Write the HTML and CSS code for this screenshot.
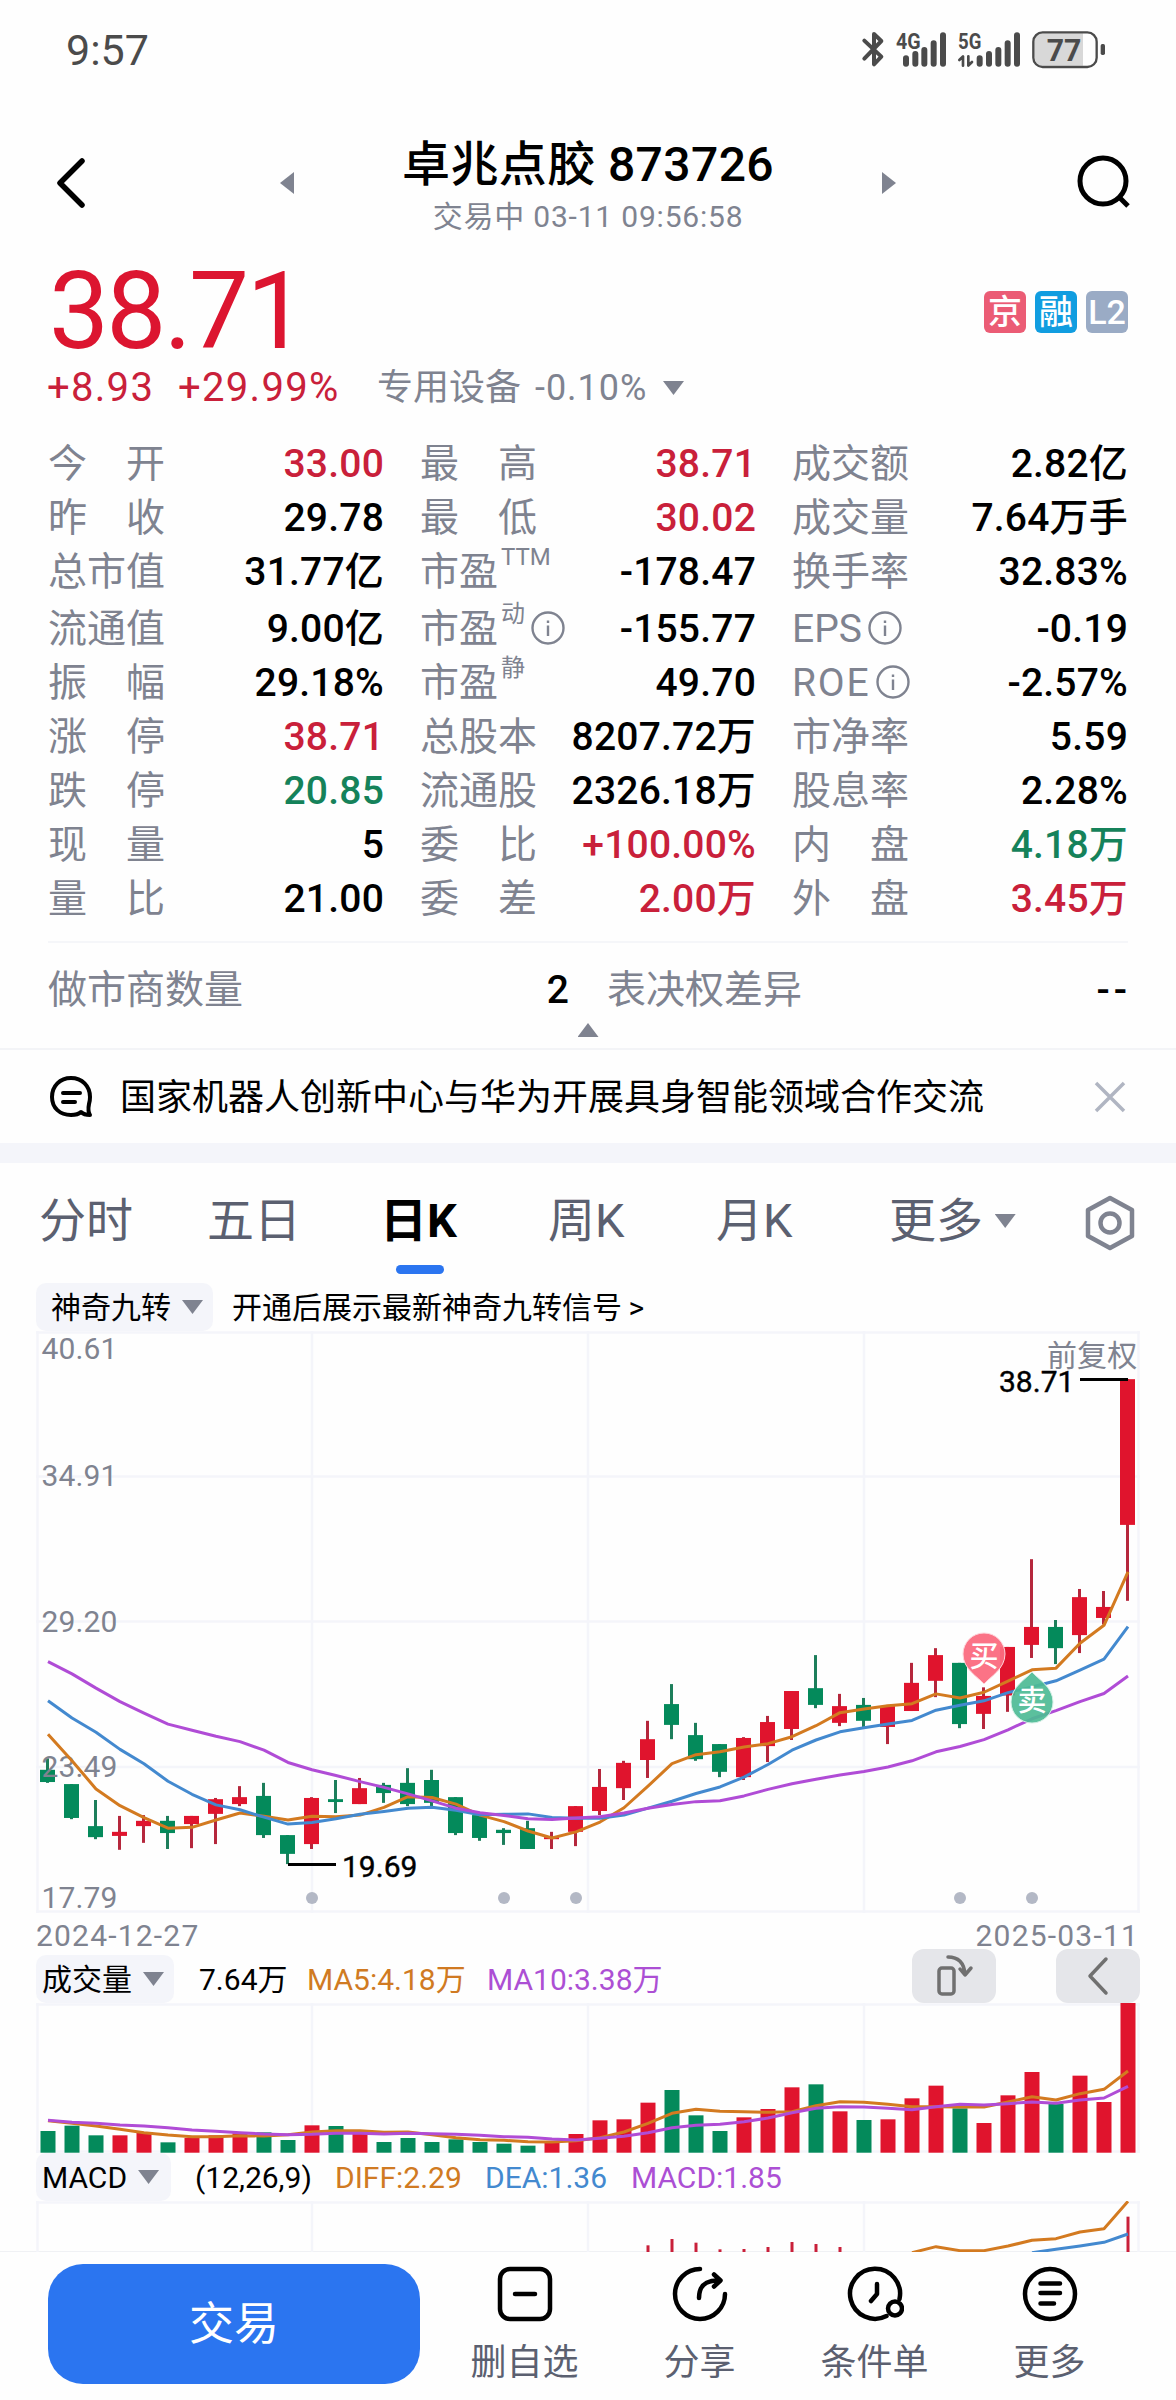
FILE: index.html
```html
<!DOCTYPE html>
<html lang="zh-CN">
<head>
    <meta charset="UTF-8">
    <meta name="viewport" content="width=device-width, initial-scale=1.0">
    <title>卓兆点胶 873726</title>
    <link rel="stylesheet" href="styles.css">
</head>
<body>
    <div class="status-bar">
        <span class="clock">9:57</span>
        <svg class="status-icons" viewBox="0 0 780 180">
            <path class="bt" d="M43 62 L94 110 L72 133 V42 L94 63 L43 116"/>
            <g class="signal">
                <path d="M168 115V131M196 102V131M223 90V131M251 70V131M279 46V131"/>
                <path d="M389 115V131M417 102V131M445 90V131M473 70V131M501 46V131"/>
            </g>
            <path class="updown" d="M328 120L339 109V137M366 126L355 137V109"/>
            <text x="138" y="87" class="net" textLength="74" lengthAdjust="spacingAndGlyphs">4G</text>
            <text x="324" y="87" class="net" textLength="70" lengthAdjust="spacingAndGlyphs">5G</text>
            <path fill="#d8d8d8" d="M580 40H699V137H580Q553 137 553 108V68Q553 40 580 40Z"/>
            <rect class="battery" x="550" y="37" width="190" height="104" rx="28"/>
            <rect x="752" y="72" width="13" height="33" rx="5" fill="#4b4b4b"/>
            <text x="590" y="123" class="charge" textLength="104" lengthAdjust="spacingAndGlyphs">77</text>
        </svg>
    </div>

    <div class="header">
        <svg class="back" viewBox="0 0 30 50"><path d="M26 3L4 25L26 47"/></svg>
        <svg class="prev" viewBox="0 0 14 22"><path d="M14 0V22L0 11Z"/></svg>
        <div class="title">
            <h1>卓兆点胶 873726</h1>
            <p>交易中 03-11 09:56:58</p>
        </div>
        <svg class="next" viewBox="0 0 14 22"><path d="M0 0V22L14 11Z"/></svg>
        <svg class="search" viewBox="0 0 56 56"><circle cx="26" cy="26" r="23"/><path d="M42 42L51 51"/></svg>
    </div>

    <div class="quote">
        <div class="price">38.71</div>
        <div class="tags">
            <span class="tag jing">京</span>
            <span class="tag rong">融</span>
            <span class="tag level">L2</span>
        </div>
    </div>
    <div class="change">
        <span class="up diff">+8.93</span>
        <span class="up pct">+29.99%</span>
        <span class="sector">专用设备 <em>-0.10%</em></span>
        <i class="caret"></i>
    </div>

    <div class="stats">
        <div class="col">
            <div class="stat"><label>今　开</label><b class="up">33.00</b></div>
            <div class="stat"><label>昨　收</label><b>29.78</b></div>
            <div class="stat"><label>总市值</label><b>31.77亿</b></div>
            <div class="stat tall"><label>流通值</label><b>9.00亿</b></div>
            <div class="stat"><label>振　幅</label><b>29.18%</b></div>
            <div class="stat"><label>涨　停</label><b class="up">38.71</b></div>
            <div class="stat"><label>跌　停</label><b class="down">20.85</b></div>
            <div class="stat"><label>现　量</label><b>5</b></div>
            <div class="stat"><label>量　比</label><b>21.00</b></div>
        </div>
        <div class="col">
            <div class="stat"><label>最　高</label><b class="up">38.71</b></div>
            <div class="stat"><label>最　低</label><b class="up">30.02</b></div>
            <div class="stat"><label>市盈<small>TTM</small></label><b>-178.47</b></div>
            <div class="stat tall"><label>市盈<small>动</small><svg class="info" viewBox="0 0 34 34"><circle cx="17" cy="17" r="15.5"/><path d="M17 14.5V25M17 9.5V12"/></svg></label><b>-155.77</b></div>
            <div class="stat"><label>市盈<small>静</small></label><b>49.70</b></div>
            <div class="stat"><label>总股本</label><b>8207.72万</b></div>
            <div class="stat"><label>流通股</label><b>2326.18万</b></div>
            <div class="stat"><label>委　比</label><b class="up">+100.00%</b></div>
            <div class="stat"><label>委　差</label><b class="up">2.00万</b></div>
        </div>
        <div class="col">
            <div class="stat"><label>成交额</label><b>2.82亿</b></div>
            <div class="stat"><label>成交量</label><b>7.64万手</b></div>
            <div class="stat"><label>换手率</label><b>32.83%</b></div>
            <div class="stat tall"><label>EPS<svg class="info" viewBox="0 0 34 34"><circle cx="17" cy="17" r="15.5"/><path d="M17 14.5V25M17 9.5V12"/></svg></label><b>-0.19</b></div>
            <div class="stat"><label class="roe">ROE<svg class="info" viewBox="0 0 34 34"><circle cx="17" cy="17" r="15.5"/><path d="M17 14.5V25M17 9.5V12"/></svg></label><b>-2.57%</b></div>
            <div class="stat"><label>市净率</label><b>5.59</b></div>
            <div class="stat"><label>股息率</label><b>2.28%</b></div>
            <div class="stat"><label>内　盘</label><b class="down">4.18万</b></div>
            <div class="stat"><label>外　盘</label><b class="up">3.45万</b></div>
        </div>
    </div>

    <div class="extra">
        <div class="stat"><label>做市商数量</label><b>2</b></div>
        <div class="stat"><label>表决权差异</label><b class="empty">--</b></div>
    </div>
    <div class="collapse"><i class="caret caret-up"></i></div>

    <div class="news">
        <svg class="news-icon" viewBox="0 0 44 44"><path d="M22 3C11 3 3 11 3 22S11 40 22 40C26 40 30 39 32 37C34 39 37 40 41 40C39 37 39 34 40 29C41 26 41 24 41 22C41 11 33 3 22 3Z"/><path d="M14 18H31M14 27H26"/></svg>
        <p>国家机器人创新中心与华为开展具身智能领域合作交流</p>
        <svg class="close" viewBox="0 0 32 32"><path d="M2 2L30 30M30 2L2 30"/></svg>
    </div>

    <div class="tabs">
        <span>分时</span>
        <span class="wide">五日</span>
        <span class="active">日K</span>
        <span>周K</span>
        <span class="wide">月K</span>
        <span class="more">更多 <i class="caret"></i></span>
        <svg class="setting" viewBox="0 0 52 56"><path d="M26 3L48 15V41L26 53L4 41V15Z"/><circle cx="26" cy="28" r="9.5"/></svg>
    </div>

    <div class="chart-box">
        <div class="chart-head">
            <span class="chip chip-signal">神奇九转 <i class="caret"></i></span>
            <span class="signal-tip">开通后展示最新神奇九转信号 <em>&gt;</em></span>
        </div>
        <svg id="priceChart" width="1104" height="582" viewBox="36 0 1104 582"></svg>
        <div class="dates"><span>2024-12-27</span><span>2025-03-11</span></div>

        <div class="chart-head">
            <span class="chip chip-vol">成交量 <i class="caret"></i></span>
            <span class="v1">7.64万</span>
            <span class="v2 orange">MA5:4.18万</span>
            <span class="v3 purple">MA10:3.38万</span>
            <div class="tools">
                <button><svg viewBox="0 0 40 48"><rect x="5" y="16" width="15" height="26" rx="3"/><path d="M14 5C24 5 30 11 31 22M26 17L31 23L37 16"/></svg></button>
                <button><svg viewBox="0 0 40 48"><path d="M28 7L12 24L28 41"/></svg></button>
            </div>
        </div>
        <svg id="volumeChart" width="1104" height="150" viewBox="36 0 1104 150"></svg>

        <div class="chart-head">
            <span class="chip chip-macd">MACD <i class="caret"></i></span>
            <span class="m1">(12,26,9)</span>
            <span class="m2 orange">DIFF:2.29</span>
            <span class="m3 blue">DEA:1.36</span>
            <span class="m4 purple">MACD:1.85</span>
        </div>
        <svg id="macdChart" width="1104" height="51" viewBox="36 0 1104 51"></svg>
    </div>

    <div class="bottom-bar">
        <button class="trade">交易</button>
        <div class="action">
            <svg viewBox="0 0 58 58"><rect x="4" y="4" width="50" height="50" rx="10"/><path d="M19 29H39"/></svg>
            <span>删自选</span>
        </div>
        <div class="action">
            <svg viewBox="0 0 58 58"><path d="M29 4A25 25 0 1 0 54 29M28 33C28 21 34 15.500 47 15.500M43 9.500L49.500 15.500L43 21.500"/></svg>
            <span>分享</span>
        </div>
        <div class="action">
            <svg viewBox="0 0 58 58"><path d="M40.500 51A25 25 0 1 1 53.500 34M31 19V29L25 36"/><circle cx="49" cy="43.500" r="7"/></svg>
            <span>条件单</span>
        </div>
        <div class="action">
            <svg viewBox="0 0 58 58"><circle cx="29" cy="29" r="25"/><path d="M19.500 18.500H39M19.500 28H39M19.500 38.500H33"/></svg>
            <span>更多</span>
        </div>
    </div>

    <script src="chart.js"></script>
</body>
</html>
```
FILE: styles.css
```css
* {
    box-sizing: border-box;
}
body {
    margin: 0;
    width: 1176px;
    height: 2400px;
    overflow: hidden;
    background-color: #fefefe;
    color: #000;
    font-family: Roboto, "Noto Sans CJK SC", sans-serif;
}
h1, p {
    margin: 0;
}
em, i {
    font-style: normal;
}
svg {
    display: block;
    flex: none;
    fill: none;
}
button {
    border: none;
    padding: 0;
    font-family: inherit;
}
.up {
    color: #c9203a;
}
.down {
    color: #15825a;
}
.orange {
    color: #d07a22;
}
.blue {
    color: #4389cf;
}
.purple {
    color: #ac4fd4;
}
.caret {
    display: inline-block;
    width: 21px;
    height: 14px;
    background-color: #7f8390;
    clip-path: polygon(0 0, 100% 0, 50% 100%);
}
.caret-up {
    clip-path: polygon(50% 0, 100% 100%, 0 100%);
}

/* status bar */
.status-bar {
    display: flex;
    justify-content: space-between;
    height: 120px;
    padding: 20px 66px 0 66px;
}
.clock {
    font-size: 43px;
    line-height: 61px;
    color: #4b4b4b;
}
.status-icons {
    width: 260px;
    height: 60px;
    stroke-linecap: round;
    stroke-linejoin: round;
}
.status-icons path.bt {
    stroke: #4b4b4b;
    stroke-width: 12;
}
.signal {
    stroke: #4b4b4b;
    stroke-width: 18;
}
.updown {
    stroke: #4b4b4b;
    stroke-width: 8;
}
.battery {
    stroke: #4b4b4b;
    stroke-width: 7;
}
.net {
    fill: #4b4b4b;
    font-size: 66px;
    font-weight: 700;
}
.charge {
    fill: #4b4b4b;
    font-size: 94px;
    font-weight: 700;
}

/* header */
.header {
    display: flex;
    align-items: center;
    height: 126px;
    padding: 0 43px 0 56px;
}
.back {
    width: 30px;
    height: 50px;
    stroke: #000;
    stroke-width: 5.5;
    stroke-linecap: round;
    stroke-linejoin: round;
}
.prev, .next {
    width: 14px;
    height: 22px;
    fill: #7f8390;
}
.prev {
    margin-left: 194px;
}
.search {
    width: 56px;
    height: 56px;
    margin-left: auto;
    stroke: #000;
    stroke-width: 5;
}
.title {
    width: 588px;
    padding-top: 8px;
    text-align: center;
}
.title h1 {
    font-size: 48px;
    font-weight: 500;
    line-height: 56px;
    letter-spacing: 0.4px;
}
.title p {
    margin-top: 4px;
    font-size: 30px;
    line-height: 40px;
    letter-spacing: 0.8px;
    color: #7f8390;
}

/* price */
.quote {
    display: flex;
    justify-content: space-between;
    height: 110px;
    padding: 0 48px 0 49px;
    margin-top: 10px;
}
.price {
    font-size: 107px;
    line-height: 111px;
    letter-spacing: -2.8px;
    color: #dc1530;
}
.tags {
    display: flex;
    gap: 9px;
    padding-top: 35px;
}
.tag {
    width: 42px;
    height: 42px;
    border-radius: 6px;
    color: #fff;
    font-size: 34px;
    font-weight: 500;
    line-height: 42px;
    text-align: center;
}
.jing {
    background-color: #eb5c75;
}
.rong {
    background-color: #119de0;
}
.level {
    background-color: #9aabc5;
}
.change {
    display: flex;
    align-items: center;
    height: 44px;
    padding-left: 47px;
    font-size: 40px;
    line-height: 44px;
    letter-spacing: 1.3px;
    white-space: nowrap;
}
.diff {
    width: 131px;
}
.pct {
    width: 199px;
}
.sector {
    width: 286px;
    font-size: 36px;
    letter-spacing: 0;
    color: #7f8390;
}
.sector em {
    margin-left: 5px;
    letter-spacing: 1px;
}

/* stats */
.stats {
    display: grid;
    grid-template-columns: repeat(3, 336px);
    gap: 36px;
    width: 1080px;
    margin: 27px auto 0;
}
.stat {
    display: flex;
    justify-content: space-between;
    height: 54px;
    font-size: 39px;
    line-height: 54px;
    white-space: nowrap;
}
.tall {
    height: 57px;
    padding-top: 3px;
}
.stat label {
    display: flex;
    color: #7f8390;
}
.stat b {
    font-weight: 500;
    letter-spacing: 0.2px;
}
.stat .empty {
    letter-spacing: 4px;
    margin-right: -3px;
}
.stat .roe {
    letter-spacing: 1.8px;
}
.stat small {
    margin-left: 3px;
    font-size: 24px;
    line-height: 24px;
}
.info {
    width: 34px;
    height: 34px;
    margin: 9px 0 0 6px;
    stroke: #7f8390;
    stroke-width: 2.4;
}
.extra {
    display: grid;
    grid-template-columns: 521px 1fr;
    column-gap: 38px;
    width: 1080px;
    height: 81px;
    margin: 15px auto 0;
    padding-top: 20px;
    border-top: 2px solid #f5f6f9;
}
.collapse {
    height: 28px;
    padding-top: 1px;
    line-height: 0;
    text-align: center;
    border-bottom: 2px solid #f3f4f7;
}

/* news */
.news {
    display: flex;
    align-items: center;
    height: 113px;
    padding: 0 50px 0 49px;
    border-bottom: 20px solid #f4f5fa;
}
.news-icon {
    width: 44px;
    height: 44px;
    stroke: #000;
    stroke-width: 4;
    stroke-linecap: round;
    stroke-linejoin: round;
}
.news p {
    margin-left: 27px;
    padding-top: 2px;
    font-size: 36px;
    line-height: 50px;
}
.close {
    width: 32px;
    height: 32px;
    margin-left: auto;
    stroke: #b0b5c2;
    stroke-width: 3.5;
}

/* period tabs */
.tabs {
    display: flex;
    height: 120px;
    padding: 27px 39px 0;
    color: #5b6070;
    font-size: 47px;
    line-height: 62px;
    white-space: nowrap;
}
.tabs span {
    width: 168px;
}
.tabs .wide {
    width: 173px;
}
.tabs .active {
    color: #000;
    font-weight: 700;
}
.tabs .active::after {
    content: "";
    display: block;
    width: 48px;
    height: 9px;
    margin: 13px 0 0 16px;
    border-radius: 5px;
    background-color: #2b75f0;
}
.tabs .more {
    width: 190px;
}
.tabs .caret {
    vertical-align: 9px;
}
.setting {
    width: 52px;
    height: 56px;
    margin: 5px 0 0 5px;
    stroke: #7f8390;
    stroke-width: 4.5;
    stroke-linejoin: round;
}

/* charts */
.chart-box {
    width: 1104px;
    height: 968px;
    margin-left: 36px;
}
.chart-head {
    display: flex;
    height: 48px;
    font-size: 30px;
    line-height: 49px;
    white-space: nowrap;
}
.chip {
    border-radius: 10px;
    background-color: #f4f5fa;
    display: flex;
    align-items: center;
    gap: 11px;
    padding-left: 6px;
}
.chip-signal {
    width: 177px;
    padding-left: 15px;
    margin-right: 19px;
}
.signal-tip em {
    margin-left: -1px;
}
.chip-vol {
    width: 138px;
}
.chip-macd {
    width: 135px;
}
.v1 {
    width: 108px;
    margin-left: 25px;
}
.v2 {
    width: 180px;
}
.m1 {
    width: 140px;
    margin-left: 24px;
}
.m2 {
    width: 150px;
}
.m3 {
    width: 146px;
}
.dates {
    display: flex;
    justify-content: space-between;
    height: 42px;
    padding-right: 1px;
    font-size: 30px;
    line-height: 46px;
    letter-spacing: 1.2px;
    color: #7f8390;
}
.tools {
    display: flex;
    gap: 60px;
    height: 54px;
    margin: -6px 0 0 auto;
}
.tools button {
    display: flex;
    align-items: center;
    justify-content: center;
    width: 84px;
    border-radius: 12px;
    background-color: #e5e6ea;
}
.tools svg {
    width: 40px;
    height: 48px;
    stroke: #707070;
    stroke-width: 3.5;
    stroke-linecap: round;
    stroke-linejoin: round;
}
#priceChart {
    overflow: visible;
}
.grid {
    stroke: #f4f5fa;
    stroke-width: 2.5;
}
.axis {
    fill: #7f8390;
    font-size: 30px;
    letter-spacing: 0.1px;
}
.mark {
    fill: #000;
    stroke: #000;
    stroke-width: 0.4;
    font-size: 30px;
}
.mark-line {
    stroke: #000;
    stroke-width: 3;
}
.pin-text {
    fill: #fff;
    font-size: 29px;
    font-weight: 500;
    text-anchor: middle;
}

/* bottom bar */
.bottom-bar {
    display: flex;
    height: 148px;
    padding: 12px 39px 0 48px;
    border-top: 1px solid #f0f1f4;
    background-color: #fefefe;
}
.trade {
    width: 372px;
    height: 120px;
    margin-right: 17px;
    padding-bottom: 7px;
    border-radius: 35px;
    background-color: #2b75f0;
    color: #fff;
    font-size: 45px;
}
.action {
    flex: 1;
    display: flex;
    flex-direction: column;
    align-items: center;
    padding-top: 1px;
    color: #5b6070;
    font-size: 36px;
    line-height: 50px;
}
.action svg {
    width: 58px;
    height: 58px;
    margin-bottom: 15px;
    stroke: #000;
    stroke-width: 4.5;
    stroke-linecap: round;
    stroke-linejoin: round;
}
```
FILE: chart.js
```js
const RED = '#e0142d';
const GREEN = '#048a5b';
const ORANGE = '#d37a20';
const BLUE = '#4389cf';
const PURPLE = '#b04cd6';

// [color, high, body top, body bottom, low]
const candles = [
    ['g', 1074, 1102, 1132, 1134], ['g', 1137, 1137, 1220, 1223], ['g', 1176, 1240, 1267, 1272],
    ['r', 1215, 1254, 1264, 1298], ['r', 1213, 1227, 1240, 1281], ['g', 1215, 1227, 1257, 1296],
    ['r', 1215, 1215, 1235, 1294], ['r', 1171, 1174, 1210, 1284], ['r', 1142, 1169, 1186, 1191],
    ['g', 1134, 1166, 1262, 1269], ['g', 1262, 1262, 1308, 1333], ['r', 1169, 1171, 1284, 1296],
    ['g', 1127, 1174, 1181, 1208], ['r', 1122, 1147, 1186, 1186], ['g', 1134, 1139, 1159, 1183],
    ['g', 1098, 1134, 1186, 1191], ['g', 1102, 1127, 1183, 1191], ['g', 1169, 1169, 1257, 1262],
    ['g', 1213, 1213, 1269, 1276], ['g', 1245, 1249, 1257, 1286], ['g', 1227, 1245, 1296, 1296],
    ['r', 1254, 1267, 1272, 1296], ['r', 1191, 1191, 1254, 1289], ['r', 1100, 1144, 1203, 1213],
    ['r', 1080, 1085, 1147, 1176], ['r', 982, 1027, 1078, 1122], ['g', 892, 941, 992, 1027],
    ['g', 987, 1017, 1076, 1080], ['g', 1039, 1039, 1107, 1120], ['r', 1022, 1024, 1120, 1127],
    ['r', 970, 985, 1044, 1083], ['r', 909, 909, 1002, 1029], ['g', 821, 902, 943, 951],
    ['r', 916, 946, 987, 995], ['g', 926, 943, 982, 997], ['r', 943, 946, 997, 1039],
    ['r', 840, 889, 958, 958], ['r', 804, 821, 884, 924], ['g', 840, 840, 990, 1000],
    ['r', 900, 921, 965, 1002], ['r', 801, 801, 920, 960], ['r', 586, 752, 796, 828],
    ['g', 735, 752, 804, 843], ['r', 659, 679, 772, 816], ['r', 664, 703, 730, 746],
    ['r', 145, 145, 502, 688]
];
const ma5 = [1015, 1080, 1149, 1190, 1219, 1245, 1243, 1225, 1208, 1216, 1225, 1216, 1217, 1213, 1194, 1168, 1170, 1186, 1213, 1229, 1252, 1269, 1254, 1230, 1195, 1142, 1087, 1065, 1058, 1046, 1038, 1021, 994, 962, 953, 945, 940, 916, 926, 912, 885, 857, 853, 792, 748, 617];
const ma10 = [933, 975, 1010, 1052, 1087, 1130, 1162, 1188, 1200, 1218, 1235, 1231, 1222, 1211, 1204, 1196, 1194, 1201, 1212, 1211, 1210, 1219, 1221, 1221, 1213, 1196, 1179, 1160, 1144, 1120, 1089, 1054, 1029, 1009, 999, 990, 981, 956, 944, 933, 913, 899, 884, 858, 831, 751];
const ma20 = [837, 867, 902, 935, 963, 990, 1005, 1020, 1033, 1054, 1084, 1102, 1116, 1131, 1145, 1161, 1178, 1196, 1207, 1214, 1222, 1224, 1220, 1217, 1208, 1196, 1187, 1180, 1178, 1166, 1150, 1136, 1125, 1115, 1106, 1095, 1080, 1058, 1045, 1028, 1004, 977, 957, 935, 915, 872];

const volumes = [603, 587, 616, 616, 609, 637, 624, 616, 610, 607, 630, 586, 588, 612, 636, 624, 636, 628, 636, 641, 647, 639, 612, 571, 568, 518, 480, 556, 603, 562, 537, 472, 463, 544, 570, 568, 505, 467, 535, 579, 496, 426, 522, 437, 516, 218];
const volMa5 = [572, 580, 588, 598, 608, 615, 620, 620, 617, 618, 614, 606, 602, 602, 607, 606, 614, 623, 629, 631, 635, 636, 632, 623, 606, 580, 550, 538, 544, 545, 547, 545, 527, 515, 517, 523, 530, 530, 531, 531, 516, 500, 510, 491, 478, 423];
const volMa10 = [571, 577, 580, 585, 588, 593, 600, 604, 608, 612, 614, 613, 610, 610, 612, 610, 611, 613, 616, 620, 622, 627, 630, 625, 619, 608, 593, 586, 583, 575, 564, 548, 535, 530, 531, 535, 539, 530, 523, 525, 521, 516, 520, 510, 504, 469];

const macdBars = {25: 946, 26: 927, 27: 938, 28: 958, 29: 957, 30: 951, 31: 936, 32: 942, 33: 951, 45: 860};
const diff = [968, 950, 962, 962, 948, 931, 926, 906, 896, 814];
const dea = [968, 958, 948, 937, 912];

const getX = i => 47.5 + 24 * i;
const priceY = v => v / 2.45 - 11;
const volY = v => v / 3 - 73;
const macdY = v => v / 3 - 271;

function line(x1, y1, x2, y2, cls) {
    return `<line x1="${x1}" y1="${y1}" x2="${x2}" y2="${y2}" class="${cls}"/>`;
}

function bar(x, top, bottom, width, color) {
    return `<rect x="${x - width / 2}" y="${top}" width="${width}" height="${bottom - top}" fill="${color}"/>`;
}

function curve(values, start, toY, color) {
    const points = values.map((v, i) => `${getX(start + i) + 0.5},${toY(v)}`).join(' ');
    return `<polyline points="${points}" fill="none" stroke="${color}" stroke-width="3" stroke-linejoin="round"/>`;
}

function grid(height, rows) {
    let html = '';
    [37.5, 312, 588, 864, 1138.5].forEach(x => html += line(x, 0, x, height, 'grid'));
    rows.forEach(y => html += line(36, y, 1140, y, 'grid'));
    return html;
}

function drawPrice() {
    let html = grid(582, [1.5, 145.5, 290.5, 436, 580.5]);
    candles.forEach(([c, high, top, bottom, low], i) => {
        const color = c === 'r' ? RED : GREEN;
        html += bar(getX(i), priceY(high), priceY(low), 3, c === 'r' ? '#b5273c' : '#1d7e5b');
        html += bar(getX(i), priceY(top), priceY(bottom), 15, color);
    });
    [['40.61', 28], ['34.91', 155], ['29.20', 301], ['23.49', 446], ['17.79', 577]].forEach(([t, y]) => {
        html += `<text x="41.5" y="${y}" class="axis">${t}</text>`;
    });
    html += curve(ma5, 0, priceY, ORANGE) + curve(ma10, 0, priceY, BLUE) + curve(ma20, 0, priceY, PURPLE);
    html += '<text x="1047" y="35" class="axis">前复权</text>';
    html += '<text x="999" y="61" class="mark">38.71</text>' + line(1080, 48.5, 1128, 48.5, 'mark-line');
    html += '<text x="342" y="546" class="mark">19.69</text>' + line(288, 533.5, 336, 533.5, 'mark-line');
    [312, 504, 576, 960, 1032].forEach(x => html += `<circle cx="${x}" cy="567" r="6" fill="#b3b8c5"/>`);
    // buy / sell pins
    html += '<path d="M984 353C978 346 963 338 963 323A21 21 0 0 1 1005 323C1005 338 990 346 984 353Z" fill="#fb6b80" fill-opacity=".95" stroke="#ffd6dc"/>';
    html += '<text x="984" y="336" class="pin-text">买</text>';
    html += '<path d="M1032 341C1026 348 1011 356 1011 371A21 21 0 0 0 1053 371C1053 356 1038 348 1032 341Z" fill="#4dbb95" fill-opacity=".92" stroke="#d5f0e6"/>';
    html += '<text x="1032" y="380" class="pin-text">卖</text>';
    document.getElementById('priceChart').innerHTML = html;
}

function drawVolume() {
    let html = grid(150, [1.5, 148.5]);
    volumes.forEach((v, i) => html += bar(getX(i) + 0.5, volY(v), 149.7, 15, candles[i][0] === 'r' ? RED : GREEN));
    html += curve(volMa5, 0, volY, ORANGE) + curve(volMa10, 0, volY, PURPLE);
    document.getElementById('volumeChart').innerHTML = html;
}

function drawMacd() {
    let html = grid(51, [1.5]);
    for (const [i, v] of Object.entries(macdBars)) {
        html += bar(getX(Number(i)) + 0.5, macdY(v), 51, 3, '#c9203a');
    }
    html += curve(diff, 36, macdY, ORANGE) + curve(dea, 41, macdY, BLUE);
    document.getElementById('macdChart').innerHTML = html;
}

drawPrice();
drawVolume();
drawMacd();
```
